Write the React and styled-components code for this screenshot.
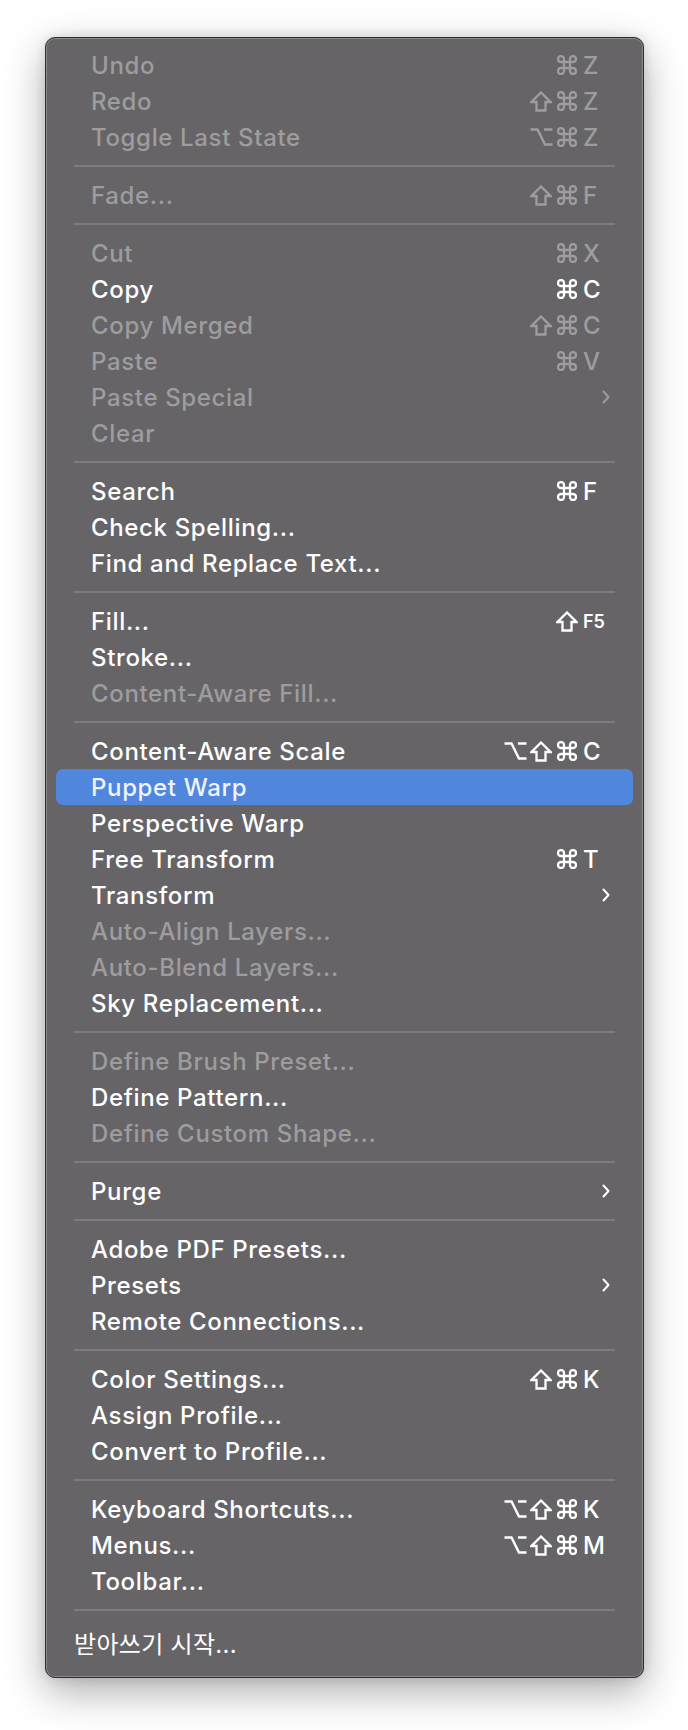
import React from 'react';
import styled, { createGlobalStyle } from 'styled-components';

const GlobalStyle = createGlobalStyle`
  html, body {
    margin: 0;
    padding: 0;
    background: #ffffff;
  }
  body {
    width: 688px;
    height: 1730px;
    overflow: hidden;
  }
`;

const Page = styled.div`
  padding: 37px 44px 0 45px;
`;

const Menu = styled.div`
  width: 599px;
  box-sizing: border-box;
  background: #666467;
  border: 1px solid #2e2d2f;
  border-radius: 10px;
  box-shadow: inset 0 0 0 1px #8b898c, 0 14px 40px rgba(0, 0, 0, 0.32),
    0 0 12px rgba(0, 0, 0, 0.12);
  padding: 9px 10px 14px;
  font-family: Inter, 'Noto Sans CJK KR', sans-serif;
`;

const Row = styled.div`
  height: ${(p) => (p.$flush ? '42px' : '36px')};
  display: flex;
  align-items: center;
  padding: 0 23px 0 ${(p) => (p.$flush ? '18px' : '35px')};
  border-radius: 7px;
  font-size: 24px;
  font-weight: ${(p) => (p.$flush ? 400 : 500)};
  letter-spacing: ${(p) => (p.$flush ? '0.3px' : '0.65px')};
  background: ${(p) => (p.$active ? '#5186dd' : 'transparent')};
  color: ${(p) => (p.$active ? '#eef3fc' : p.$disabled ? '#9e9c9f' : '#ffffff')};
`;

const Label = styled.span`
  flex: 1;
  white-space: nowrap;
`;

const Shortcut = styled.span`
  display: flex;
  align-items: center;
`;

const Mod = styled.span`
  width: 26px;
  height: 22px;
  display: flex;
  align-items: center;
  justify-content: center;
`;

const Key = styled.span`
  width: 27px;
  margin-left: 3px;
  text-align: left;
  font-size: ${(p) => (p.$small ? '18px' : '24px')};
  font-weight: ${(p) => (p.$small ? 600 : 500)};
  letter-spacing: 0;
`;

const Separator = styled.div`
  height: 2px;
  margin: 10px 18px;
  background: #7d7b7e;
`;

const Chevron = () => (
  <svg width="8" height="14" viewBox="0 0 8 14" fill="none">
    <path d="M1.5 1.5 L6.5 7 L1.5 12.5" stroke="currentColor" strokeWidth="2" strokeLinecap="round" strokeLinejoin="round" />
  </svg>
);

const CommandIcon = () => (
  <svg width="20" height="20" viewBox="0 0 20 20" fill="none">
    <path
      d="M7 7 V4 A3 3 0 1 0 4 7 H16 A3 3 0 1 0 13 4 V16 A3 3 0 1 0 16 13 H4 A3 3 0 1 0 7 16 Z"
      stroke="currentColor"
      strokeWidth="2.3"
      strokeLinejoin="round"
    />
  </svg>
);

const ShiftIcon = () => (
  <svg width="22" height="21" viewBox="0 0 22 21" fill="none">
    <path
      d="M11 1.5 L1.5 11 H6.5 V19.5 H15.5 V11 H20.5 Z"
      stroke="currentColor"
      strokeWidth="2.3"
      strokeLinejoin="miter"
    />
  </svg>
);

const OptionIcon = () => (
  <svg width="23" height="20" viewBox="0 0 23 20" fill="none">
    <path
      d="M0.5 2.5 H7.5 L15 17.5 H22.5 M14 2.5 H22.5"
      stroke="currentColor"
      strokeWidth="2.4"
    />
  </svg>
);

const modIcons = { '⌘': CommandIcon, '⇧': ShiftIcon, '⌥': OptionIcon };

const groups = [
  [
    { label: 'Undo', mods: '⌘', key: 'Z', disabled: true },
    { label: 'Redo', mods: '⇧⌘', key: 'Z', disabled: true },
    { label: 'Toggle Last State', mods: '⌥⌘', key: 'Z', disabled: true },
  ],
  [{ label: 'Fade...', mods: '⇧⌘', key: 'F', disabled: true }],
  [
    { label: 'Cut', mods: '⌘', key: 'X', disabled: true },
    { label: 'Copy', mods: '⌘', key: 'C' },
    { label: 'Copy Merged', mods: '⇧⌘', key: 'C', disabled: true },
    { label: 'Paste', mods: '⌘', key: 'V', disabled: true },
    { label: 'Paste Special', sub: true, disabled: true },
    { label: 'Clear', disabled: true },
  ],
  [
    { label: 'Search', mods: '⌘', key: 'F' },
    { label: 'Check Spelling...' },
    { label: 'Find and Replace Text...' },
  ],
  [
    { label: 'Fill...', mods: '⇧', key: 'F5', small: true },
    { label: 'Stroke...' },
    { label: 'Content-Aware Fill...', disabled: true },
  ],
  [
    { label: 'Content-Aware Scale', mods: '⌥⇧⌘', key: 'C' },
    { label: 'Puppet Warp', active: true },
    { label: 'Perspective Warp' },
    { label: 'Free Transform', mods: '⌘', key: 'T' },
    { label: 'Transform', sub: true },
    { label: 'Auto-Align Layers...', disabled: true },
    { label: 'Auto-Blend Layers...', disabled: true },
    { label: 'Sky Replacement...' },
  ],
  [
    { label: 'Define Brush Preset...', disabled: true },
    { label: 'Define Pattern...' },
    { label: 'Define Custom Shape...', disabled: true },
  ],
  [{ label: 'Purge', sub: true }],
  [
    { label: 'Adobe PDF Presets...' },
    { label: 'Presets', sub: true },
    { label: 'Remote Connections...' },
  ],
  [
    { label: 'Color Settings...', mods: '⇧⌘', key: 'K' },
    { label: 'Assign Profile...' },
    { label: 'Convert to Profile...' },
  ],
  [
    { label: 'Keyboard Shortcuts...', mods: '⌥⇧⌘', key: 'K' },
    { label: 'Menus...', mods: '⌥⇧⌘', key: 'M' },
    { label: 'Toolbar...' },
  ],
  [{ label: '받아쓰기 시작...', flush: true }],
];

const MenuItem = ({ item }) => (
  <Row $active={item.active} $disabled={item.disabled} $flush={item.flush}>
    <Label>{item.label}</Label>
    {item.key && (
      <Shortcut>
        {[...item.mods].map((m, i) => {
          const Icon = modIcons[m];
          return (
            <Mod key={i}>
              <Icon />
            </Mod>
          );
        })}
        <Key $small={item.small}>{item.key}</Key>
      </Shortcut>
    )}
    {item.sub && <Chevron />}
  </Row>
);

export default function App() {
  return (
    <Page>
      <GlobalStyle />
      <Menu>
        {groups.map((group, gi) => (
          <React.Fragment key={gi}>
            {gi > 0 && <Separator />}
            {group.map((item) => (
              <MenuItem key={item.label} item={item} />
            ))}
          </React.Fragment>
        ))}
      </Menu>
    </Page>
  );
}
